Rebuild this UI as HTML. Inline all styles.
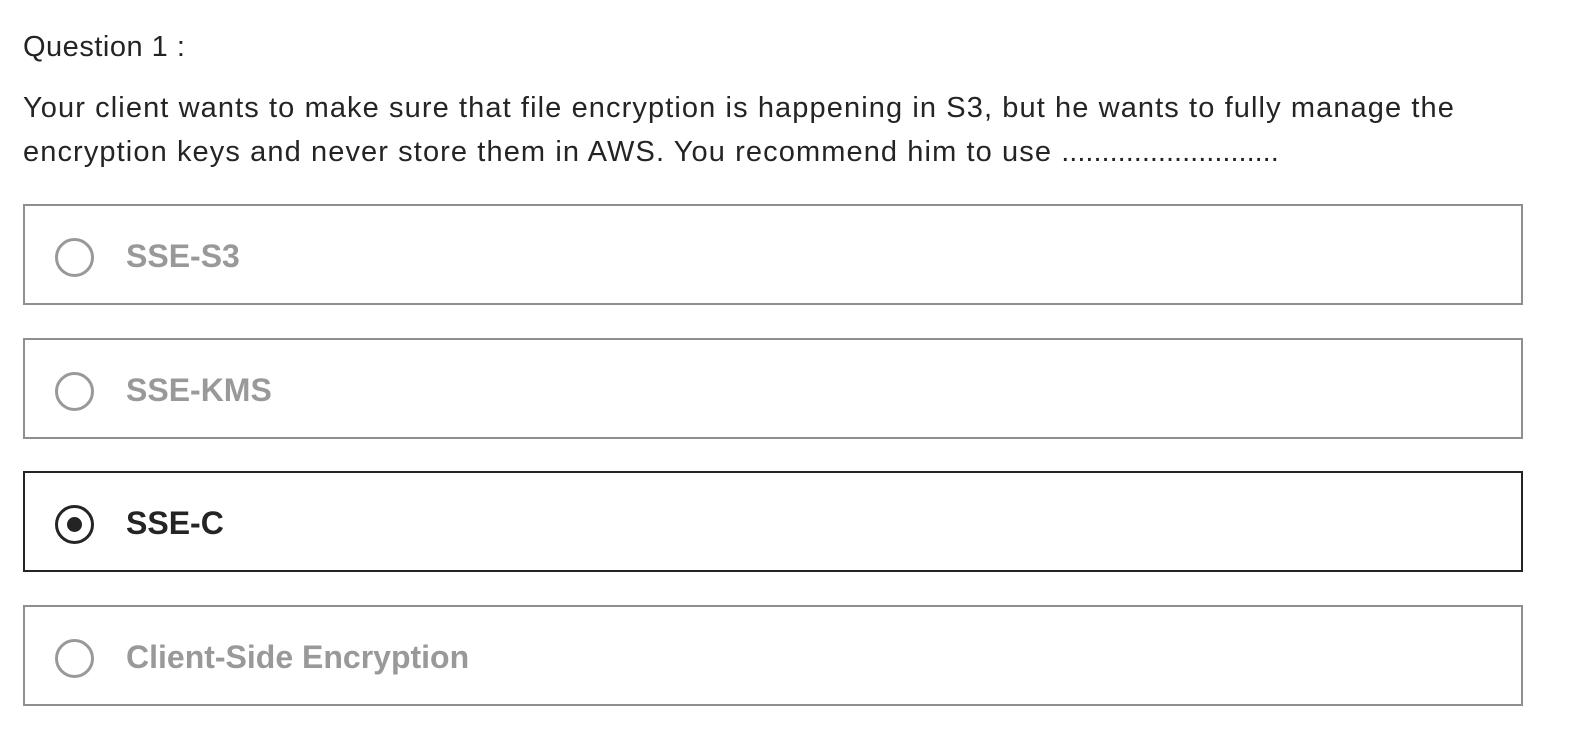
<!DOCTYPE html>
<html><head><style>
body{margin:0;background:#fff;font-family:"Liberation Sans",sans-serif;color:#242424;width:1596px;height:742px;overflow:hidden;position:relative}
.q{position:absolute;left:23px;top:29px;font-size:29px;line-height:36px;letter-spacing:0.5px}
.p{position:absolute;left:23px;top:86px;font-size:29px;line-height:44px;width:1560px;letter-spacing:1.1px}
.opt{position:absolute;left:23px;width:1496px;height:97px;border:2px solid #8f8f8f}
.opt .c{position:absolute;left:30px;top:32px;width:33px;height:33px;border:3.5px solid #999;border-radius:50%}
.opt .t{position:absolute;left:101px;top:31px;font-size:32px;line-height:38px;font-weight:bold;color:#999}
.sel{border-color:#242424}
.sel .c{border-color:#242424}
.sel .c:after{content:"";position:absolute;left:9px;top:9px;width:15px;height:15px;border-radius:50%;background:#242424}
.sel .t{color:#242424}
</style></head><body>
<div class="q">Question 1 :</div>
<div class="p">Your client wants to make sure that file encryption is happening in S3, but he wants to fully manage the<br>encryption keys and never store them in AWS. You recommend him to use <span style="letter-spacing:0">...........................</span></div>
<div class="opt" style="top:204px"><div class="c"></div><div class="t">SSE-S3</div></div>
<div class="opt" style="top:338px"><div class="c"></div><div class="t">SSE-KMS</div></div>
<div class="opt sel" style="top:471px"><div class="c"></div><div class="t">SSE-C</div></div>
<div class="opt" style="top:605px"><div class="c"></div><div class="t">Client-Side Encryption</div></div>
</body></html>
